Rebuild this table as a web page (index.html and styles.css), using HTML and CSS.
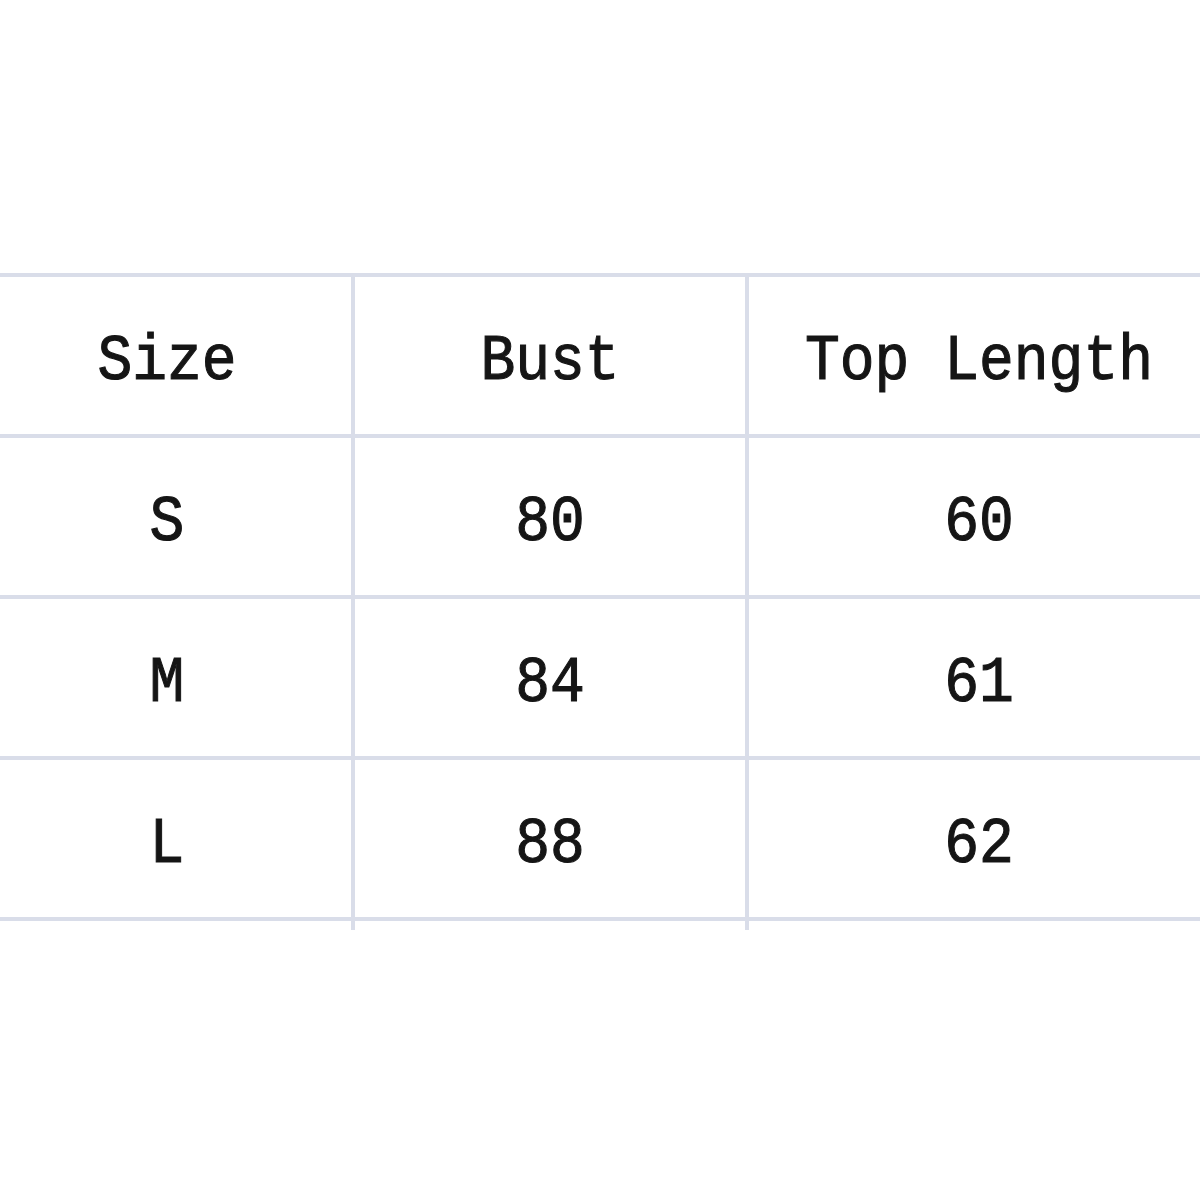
FILE: index.html
```html
<!DOCTYPE html>
<html>
<head>
<meta charset="utf-8">
<link rel="stylesheet" href="styles.css">
</head>
<body>
<div class="sheet">
  <div class="table">
    <div class="cell"><span class="t">Size</span></div>
    <div class="cell"><span class="t">Bust</span></div>
    <div class="cell"><span class="t">Top Length</span></div>
    <div class="cell"><span class="t">S</span></div>
    <div class="cell"><span class="t">80</span></div>
    <div class="cell"><span class="t">60</span></div>
    <div class="cell"><span class="t">M</span></div>
    <div class="cell"><span class="t">84</span></div>
    <div class="cell"><span class="t">61</span></div>
    <div class="cell"><span class="t">L</span></div>
    <div class="cell"><span class="t">88</span></div>
    <div class="cell"><span class="t">62</span></div>
    <div class="tail"></div>
    <div class="tail"></div>
    <div class="tail"></div>
  </div>
</div>
</body>
</html>
```
FILE: styles.css
```css
html, body {
  margin: 0;
  padding: 0;
  background: #ffffff;
  overflow: hidden;
}
.sheet {
  width: 1200px;
  height: 1200px;
  overflow: hidden;
  padding-top: 273px;
  box-sizing: border-box;
}
.table {
  display: grid;
  grid-template-columns: 368px 394px 464px;
  margin-left: -17px;
  width: 1226px;
  border-top: 4px solid #d9dde9;
}
.cell {
  border-bottom: 4px solid #d9dde9;
  border-left: 4px solid #d9dde9;
  display: flex;
  align-items: center;
  justify-content: center;
  padding-top: 12px;
  box-sizing: border-box;
  height: 161px;
}
.cell:nth-child(3n+1), .tail:nth-child(3n+1) {
  border-left: none;
}
.tail {
  height: 9px;
  border-left: 4px solid #d9dde9;
}
.t {
  display: inline-block;
  font-family: "Liberation Mono", "Courier New", monospace;
  font-weight: normal;
  -webkit-text-stroke: 1px #151515;
  font-size: 58px;
  line-height: 1;
  color: #151515;
  transform: scaleY(1.13);
  white-space: pre;
}
```
